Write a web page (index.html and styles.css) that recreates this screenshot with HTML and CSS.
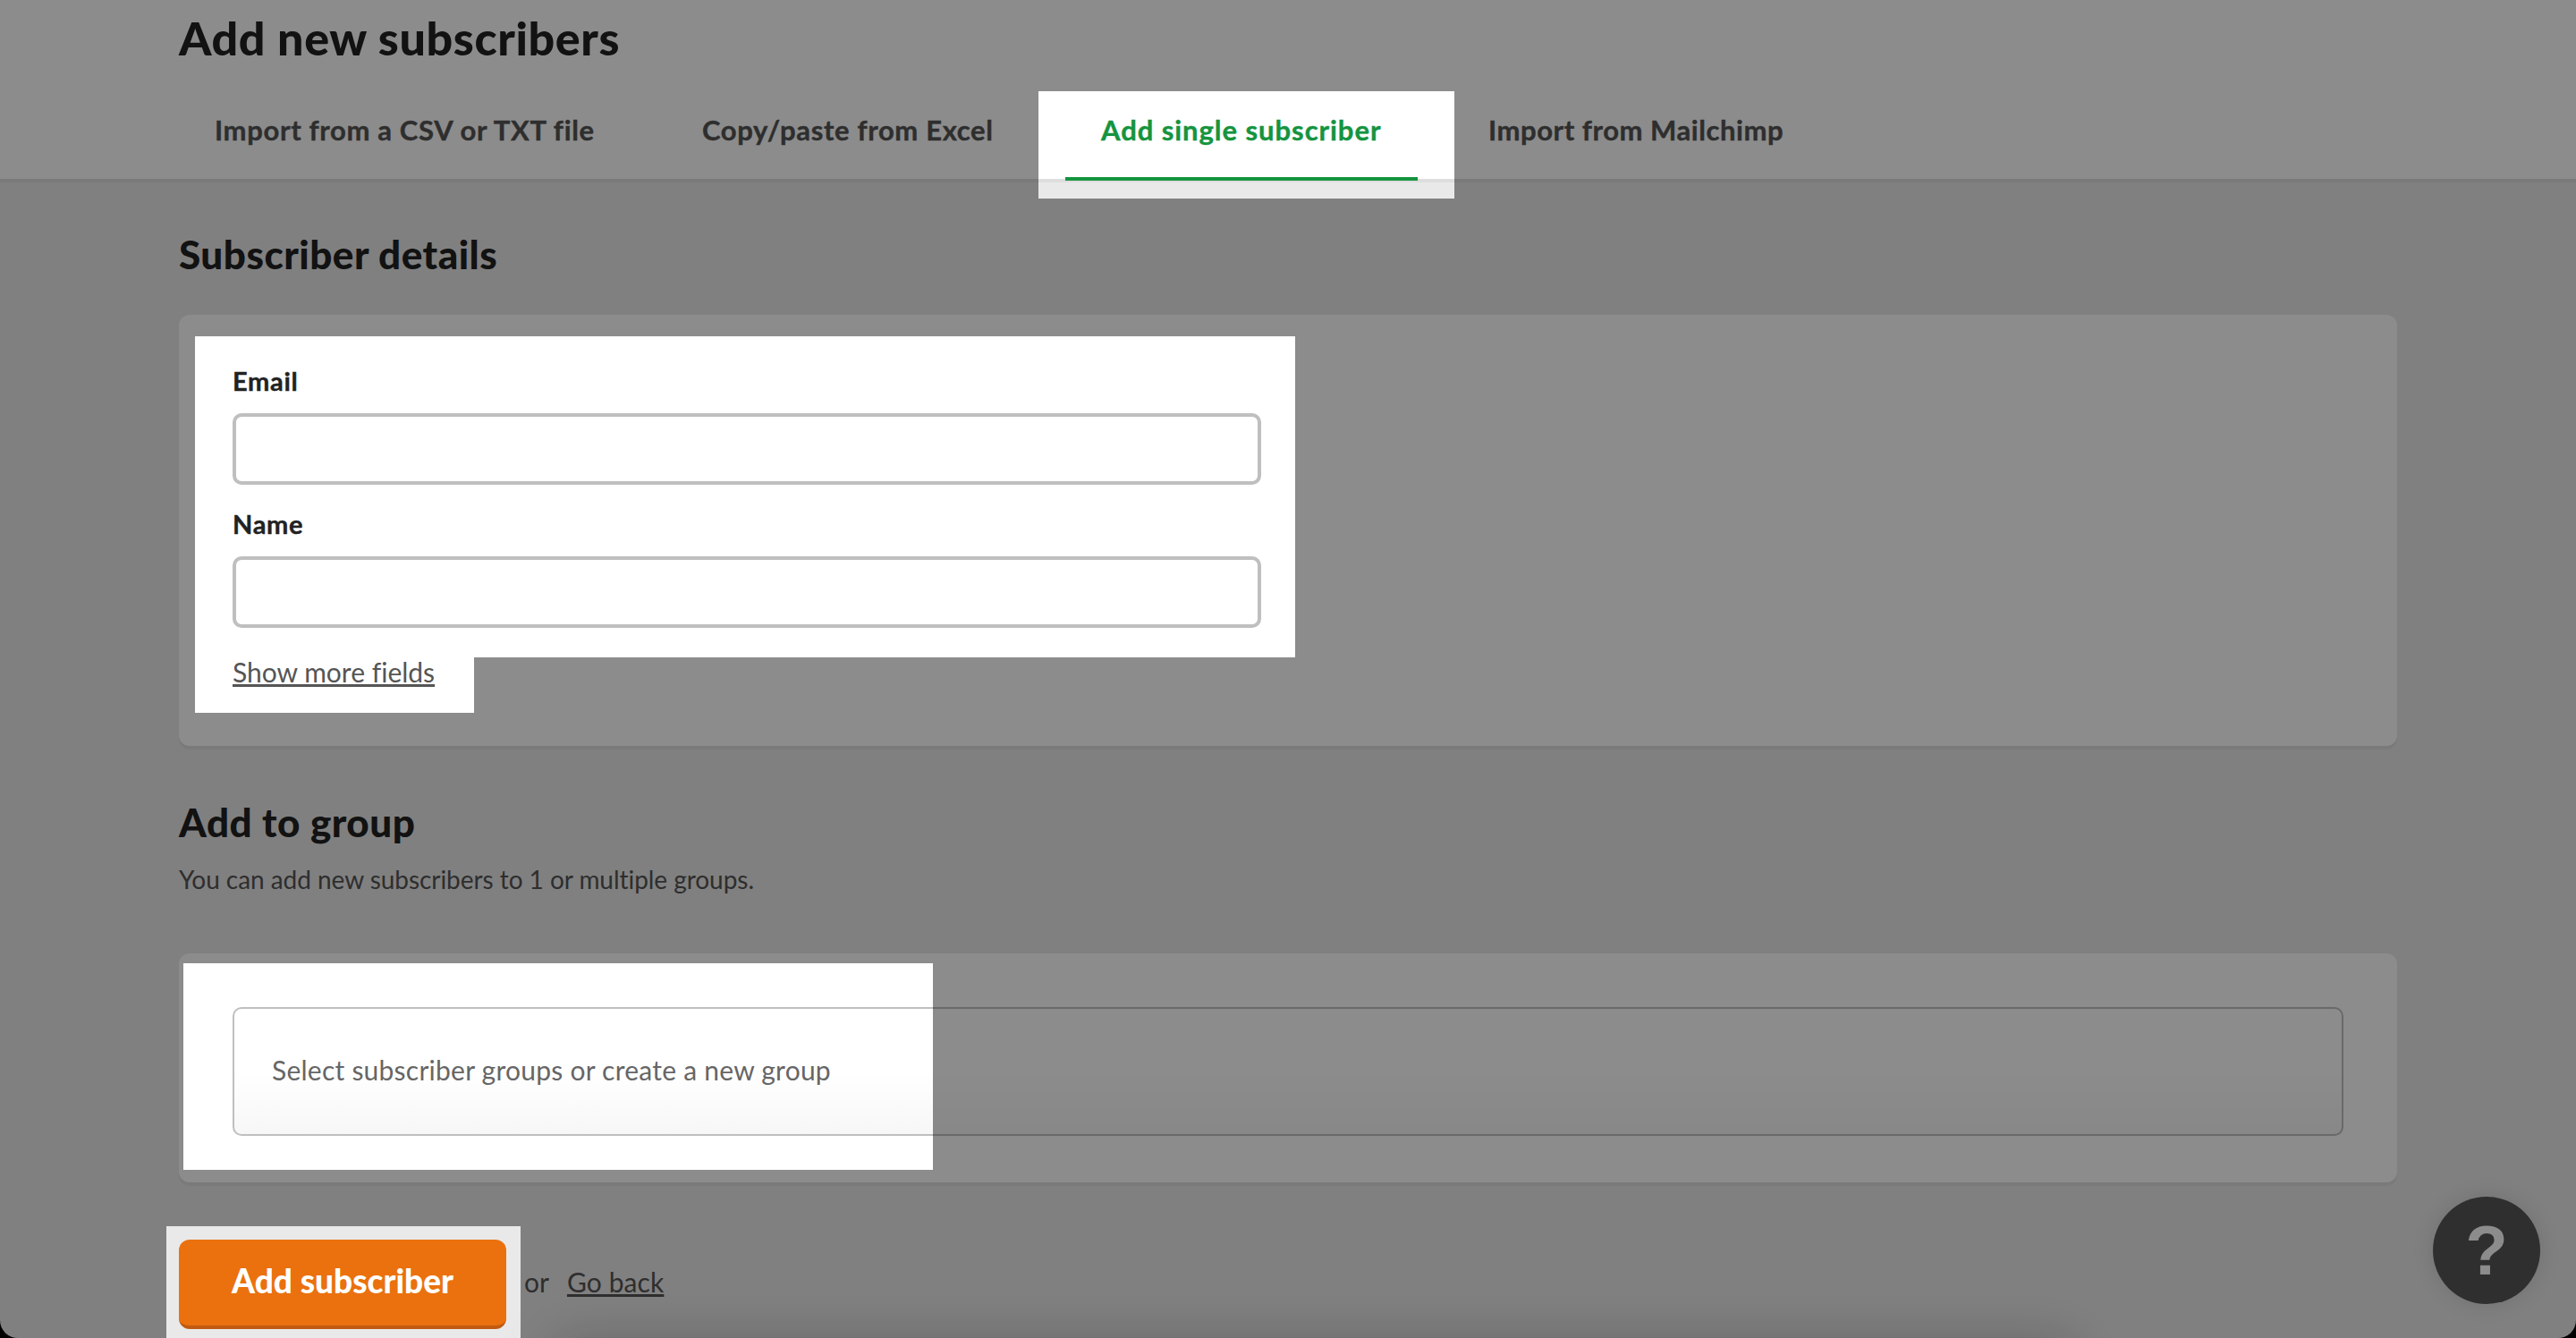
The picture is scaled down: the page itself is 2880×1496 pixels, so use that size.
FILE: index.html
```html
<!DOCTYPE html>
<html lang="en">
<head>
<meta charset="utf-8">
<title>Add new subscribers</title>
<link rel="stylesheet" href="styles.css">
</head>
<body>
<div class="app">
  <header class="top">
    <h1 class="title">Add new subscribers</h1>
    <nav class="tabs">
      <a class="tab tab-csv">Import from a CSV or TXT file</a>
      <a class="tab tab-excel">Copy/paste from Excel</a>
      <a class="tab tab-single">Add single subscriber</a>
      <a class="tab tab-mc">Import from Mailchimp</a>
    </nav>
  </header>
  <main class="main">
    <h2 class="heading h-details">Subscriber details</h2>
    <section class="card card-details">
      <label class="label" for="email">Email</label>
      <input class="input" id="email" type="text">
      <label class="label label-name" for="name">Name</label>
      <input class="input" id="name" type="text">
      <a class="more">Show more fields</a>
    </section>
    <h2 class="heading h-group">Add to group</h2>
    <p class="desc">You can add new subscribers to 1 or multiple groups.</p>
    <section class="card card-group">
      <div class="select">Select subscriber groups or create a new group</div>
    </section>
    <div class="actions">
      <button class="submit" type="button">Add subscriber</button>
      <span class="or">or</span>
      <a class="back">Go back</a>
    </div>
  </main>
</div>
<div class="overlay"></div>
<div class="dock"></div>
<button class="help" type="button">?</button>
</body>
</html>
```
FILE: styles.css
```css
* { box-sizing: border-box; }
html, body { margin: 0; height: 100%; overflow: hidden; background: #000; }
body { font-family: Lato, "Liberation Sans", sans-serif; color: #555; font-variant-ligatures: none; }
.app { height: 1496px; background: #e9e9e9; overflow: hidden; border-radius: 0 0 20px 20px; }
.top { height: 204px; background: #fff; border-bottom: 4px solid #dedede; padding: 0 200px; }
.title { margin: 0; padding-top: 14px; font-size: 52px; line-height: 56px; font-weight: 900; color: #222; letter-spacing: .6px; }
.tabs { display: flex; margin-top: 30px; height: 96px; }
.tab { font-size: 31px; font-weight: 700; line-height: 40px; padding-top: 25px; color: #555; white-space: nowrap; letter-spacing: .65px; -webkit-text-stroke: .4px currentColor; }
.tab-csv { margin-left: 40px; width: 545px; }
.tab-excel { width: 446px; }
.tab-single { width: 433px; color: #15943f; letter-spacing: .95px; position: relative; }
.tab-single::after { content: ""; position: absolute; left: -40px; width: 394px; top: 98px; height: 4px; background: #15943f; }
.tab-mc { letter-spacing: .55px; }
.main { padding: 0 200px; }
.heading { margin: 0; font-size: 44px; line-height: 50px; font-weight: 900; color: #222; letter-spacing: .5px; }
.h-details { padding-top: 55px; }
.card { background: #fff; border-radius: 12px; box-shadow: 0 4px 0 #dedede; }
.card-details { margin-top: 43px; height: 482px; padding: 56px 0 0 60px; }
.label { display: block; font-size: 29px; line-height: 36px; font-weight: 700; color: #222; letter-spacing: .7px; -webkit-text-stroke: .4px currentColor; }
.input { display: block; width: 1150px; height: 80px; margin-top: 18px; border: 4px solid #bfbfbf; border-radius: 10px; background: #fff; }
.label-name { margin-top: 26px; }
.more { display: inline-block; margin-top: 31px; font-size: 30px; line-height: 36px; color: #555; text-decoration: underline; }
.h-group { margin-top: 60px; }
.desc { margin: 21px 0 0; font-size: 28px; line-height: 36px; color: #555; letter-spacing: -.05px; }
.card-group { margin-top: 65px; height: 256px; padding: 60px 60px 0; }
.select { height: 144px; border: 2px solid #bfbfbf; border-radius: 10px; padding: 0 0 5px 42px; display: flex; align-items: center; font-size: 30px; color: #666; letter-spacing: .24px; background: linear-gradient(#fff 50%, #f7f7f7); }
.actions { display: flex; align-items: center; margin-top: 64px; height: 100px; }
.submit { width: 366px; height: 100px; border: 0; border-bottom: 4px solid #c05a10; border-radius: 12px; padding: 0 0 6px; background: #ea710e; color: #fff; font: 900 37px Lato, "Liberation Sans", sans-serif; }
.or { margin-left: 20px; padding-bottom: 6px; font-size: 30px; color: #555; }
.back { margin-left: 20px; padding-bottom: 6px; font-size: 30px; letter-spacing: .1px; color: #555; text-decoration: underline; }
.overlay { position: fixed; inset: 0; background: rgba(0,0,0,.45);
  clip-path: path(evenodd, "M0 0H2880V1496H0Z M1161 102H1626V222H1161Z M218 376H1448V735H530V797H218Z M205 1077H1043V1308H205Z M186 1371H582V1496H186Z"); }
.dock { position: fixed; left: 620px; right: 560px; top: 1500px; height: 60px; box-shadow: 0 0 60px rgba(0,0,0,.22); }
.help { position: fixed; left: 2720px; top: 1338px; width: 120px; height: 120px; border: 0; padding: 0; border-radius: 50%; background: #2f2f2f; color: #8c8c8c; font: 700 78px "Liberation Sans", sans-serif; box-shadow: 0 0 30px rgba(0,0,0,.12); }
```
